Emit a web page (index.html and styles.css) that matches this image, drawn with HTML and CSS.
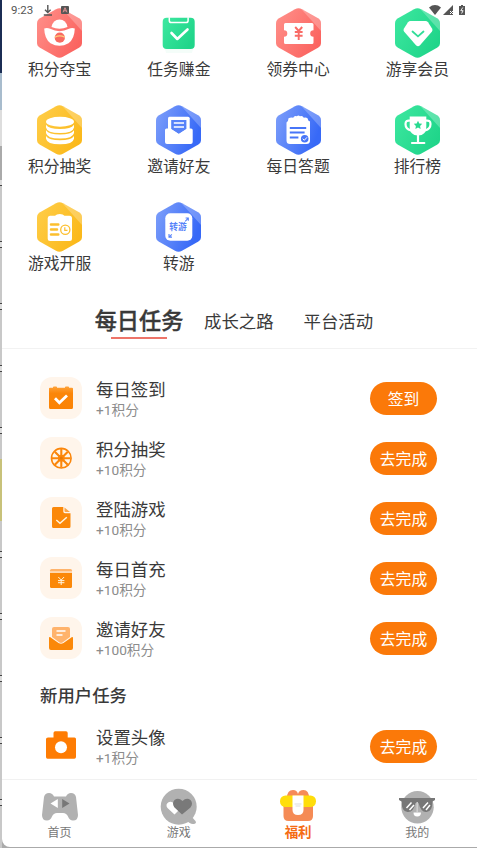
FILE: index.html
```html
<!DOCTYPE html>
<html lang="zh-CN">
<head>
<meta charset="utf-8">
<title>福利</title>
<link rel="stylesheet" href="styles.css">
</head>
<body>
<svg class="defs" aria-hidden="true">
  <defs>
    <linearGradient id="red" x1="0" y1="0" x2="1" y2=".6"><stop offset="0" stop-color="#ff918b"/><stop offset="1" stop-color="#fb6460"/></linearGradient>
    <linearGradient id="green" x1="0" y1="0" x2="1" y2=".6"><stop offset="0" stop-color="#3de8a0"/><stop offset="1" stop-color="#20d58a"/></linearGradient>
    <linearGradient id="gold" x1="0" y1="0" x2="1" y2=".6"><stop offset="0" stop-color="#ffce4a"/><stop offset="1" stop-color="#fbb91b"/></linearGradient>
    <linearGradient id="blue" x1="0" y1="0" x2="1" y2=".4"><stop offset="0" stop-color="#7fa0fa"/><stop offset="1" stop-color="#3769f7"/></linearGradient>
    <linearGradient id="orange" x1="0" y1="0" x2="0" y2="1"><stop offset="0" stop-color="#ffa33a"/><stop offset=".3" stop-color="#fb8609"/><stop offset="1" stop-color="#fb8304"/></linearGradient>
    <symbol id="hex" viewBox="0 0 45 50">
      <path d="M19 1.2Q22.5-.7 26 1.2L42 10.2Q45 12 45 15.3V34.7Q45 38 42 39.8L26 48.8Q22.5 50.7 19 48.8L3 39.8Q0 38 0 34.7V15.3Q0 12 3 10.2L19 1.2Z"/>
      <path d="M25 .8L42 10.2Q45 12 45 15.3V23Z" fill="#fff" fill-opacity=".25"/>
    </symbol>
  </defs>
</svg>
<div class="phone">
  <header class="status">
    <span class="time">9:23</span>
    <svg class="st-dl" viewBox="0 0 10 11"><path d="M4.8 0V7M2 4.7L4.8 7.5 7.6 4.7M.8 10H9" fill="none" stroke="#555" stroke-width="1.4"/></svg>
    <svg class="st-app" viewBox="0 0 8 8"><rect width="8" height="8" rx="1" fill="#555"/><path d="M2 6.3L4 1.7 6 6.3M2.8 4.8H5.2" fill="none" stroke="#e99" stroke-width=".9"/></svg>
    <span class="spacer"></span>
    <svg class="st-wifi" viewBox="0 0 12 10"><path d="M0 2.4Q6-2.2 12 2.4L6 10Z" fill="#555"/></svg>
    <svg class="st-sig" viewBox="0 0 10 10"><path d="M10 0V10H0Z" fill="#555"/><path d="M7 6L10 9M10 6L7 9" stroke="#fff" stroke-width="1"/></svg>
    <svg class="st-bat" viewBox="0 0 6 10"><path d="M2 0H4V1H6V10H0V1H2Z" fill="#555"/><path d="M3.8 2.5L1.8 5.7H4.1L2.6 8.5" fill="none" stroke="#fff" stroke-width=".9"/></svg>
  </header>

  <section class="shortcuts">
    <div class="cell"><svg viewBox="0 0 45 50"><use href="#hex" width="45" height="50" fill="url(#red)"/><path d="M14.5 19Q16 11.5 22.5 11.5T30.5 19Q22.5 22.5 14.5 19Z" fill="#fff"/><path d="M7.2 20.5Q10 19.3 13.2 20.8Q22.5 25.5 32 20.8Q35 19.3 37.8 20.5Q37.5 31 31.5 35.2Q22.5 40.5 13.5 35.2Q7.5 31 7.2 20.5Z" fill="#fff"/><circle cx="22.8" cy="29.7" r="5.1" fill="#f86a61"/><path d="M17.8 29.3Q22.8 26.5 27.8 29.3" fill="none" stroke="#ffd07a" stroke-width="1.2"/></svg><span>积分夺宝</span></div>
    <div class="cell"><svg viewBox="0 0 45 50"><path d="M8 37H38L36 45H10Z" fill="#20d58a" opacity=".05"/><rect x="6.7" y="9.8" width="32" height="31.2" rx="4" fill="url(#green)"/><path d="M13.3 9.2V12.5Q13.3 14.6 15.4 14.6H30Q32.1 14.6 32.1 12.5V9.2" fill="none" stroke="#fff" stroke-width="1.5"/><path d="M15.5 25L21.3 31 31.5 21.5" fill="none" stroke="#fff" stroke-width="2.6" stroke-linecap="round" stroke-linejoin="round"/></svg><span>任务赚金</span></div>
    <div class="cell"><svg viewBox="0 0 45 50"><use href="#hex" width="45" height="50" fill="url(#red)"/><path d="M9.5 15H36Q37.5 15 37.5 16.5V22.2A3.3 3.3 0 0 0 37.5 28.8V34.5Q37.5 36 36 36H9.5Q8 36 8 34.5V28.8A3.3 3.3 0 0 0 8 22.2V16.5Q8 15 9.5 15Z" fill="#fff"/><path d="M19.2 19L22.7 23 26.2 19M18.8 24H26.6M18.8 27.8H26.6M22.7 23V32" fill="none" stroke="#f96b66" stroke-width="1.9"/></svg><span>领券中心</span></div>
    <div class="cell"><svg viewBox="0 0 45 50"><use href="#hex" width="45" height="50" fill="url(#green)"/><path d="M15.5 13H30.5Q32 13 33 14.3L37.2 20.8Q38 22.4 36.8 23.8L25 37.3Q23 39.3 21 37.3L9.2 23.8Q8 22.4 8.8 20.8L13 14.3Q14 13 15.5 13Z" fill="#fff"/><path d="M17.5 23.5L23 28.4 28.5 23.5" fill="none" stroke="#31dd98" stroke-width="1.8" stroke-linecap="round"/></svg><span>游享会员</span></div>
    <div class="cell"><svg viewBox="0 0 45 50"><use href="#hex" width="45" height="50" fill="url(#gold)"/><g fill="#fff"><ellipse cx="23" cy="16.8" rx="14" ry="5"/><path id="coin" d="M9 19.7Q12 24 23 24T37 19.7V22.5Q36 28 23 28T9 22.5Z"/><use href="#coin" y="5.6"/><use href="#coin" y="11.2"/></g></svg><span>积分抽奖</span></div>
    <div class="cell"><svg viewBox="0 0 45 50"><use href="#hex" width="45" height="50" fill="url(#blue)"/><path d="M12 25V13.3Q12 11.8 13.5 11.8H32Q33.7 11.8 33.7 13.3V25L23 31Z" fill="#fff"/><path d="M15.2 15H30.4V24L22.8 29 15.2 24Z" fill="#5682f9"/><path d="M17.8 18H28M17.8 22H28" stroke="#fff" stroke-width="1.7"/><path d="M10.5 23.5H14L22.8 29 31.5 23.5H35Q36.7 23.5 36.7 25V37Q36.7 39 34.7 39H11Q9 39 9 37V25Q9 23.5 10.5 23.5Z" fill="#fff"/></svg><span>邀请好友</span></div>
    <div class="cell"><svg viewBox="0 0 45 50"><use href="#hex" width="45" height="50" fill="url(#blue)"/><path d="M12.5 13.3Q15 12 17.2 12.8Q18.3 10.2 20.8 11.3Q22.4 9.5 24 11.3Q26.7 10.2 27.8 12.8Q30 12 31.7 13.5Q31.7 15.8 34 16.5V35.5Q34 39 30.5 39H14Q10.5 39 10.5 35.5V17.5Q12.5 16 12.5 13.3Z" fill="#fff"/><path d="M13.8 23H30.2M13.8 27.5H28.6M13.8 32.5H22.4" stroke="#4775f8" stroke-width="2"/><circle cx="28.7" cy="33.7" r="3.8" fill="#4775f8"/><path d="M26.8 33.7L28.3 35.3 31 32.3" stroke="#fff" fill="none" stroke-width="1"/></svg><span>每日答题</span></div>
    <div class="cell"><svg viewBox="0 0 45 50"><use href="#hex" width="45" height="50" fill="url(#green)"/><g fill="none" stroke="#fff" stroke-width="2.2"><path d="M15 15.7Q10.5 15 10.5 19Q10.5 24 16 25.5M31 15.7Q35.5 15 35.5 19Q35.5 24 30 25.5"/><path d="M23 29V37M17 38H29.3" stroke-linecap="round"/></g><path d="M14.7 11.5H31.3V22Q31.3 30.5 23 30.5T14.7 22Z" fill="#fff"/><path d="M23 15.8L24.3 18.5 27.2 18.8 25.1 20.9 25.6 23.9 23 22.5 20.4 23.9 20.9 20.9 18.8 18.8 21.7 18.5Z" fill="#28d990"/></svg><span>排行榜</span></div>
    <div class="cell"><svg viewBox="0 0 45 50"><use href="#hex" width="45" height="50" fill="url(#gold)"/><path d="M13 13.7H18Q19.5 12 22.8 12T27.5 13.7H32.5Q35 13.7 35 16.2V36.5Q35 39 32.5 39H13.2Q10.7 39 10.7 36.5V16.2Q10.7 13.7 13 13.7Z" fill="#fff"/><path d="M14 22.5H21.3M14 27.5H20M14 32.5H21.3" stroke="#fcbf2e" stroke-width="2.5" stroke-linecap="round"/><circle cx="28.3" cy="27.8" r="4.6" fill="#fff" stroke="#fcbf2e" stroke-width="1.3"/><path d="M27.8 25.3V28.3H30.5" fill="none" stroke="#fcbf2e" stroke-width="1.2"/></svg><span>游戏开服</span></div>
    <div class="cell"><svg viewBox="0 0 45 50"><use href="#hex" width="45" height="50" fill="url(#blue)"/><rect x="9.3" y="11.3" width="27" height="27.5" rx="5" fill="#fff"/><text x="13.3" y="27.8" class="mini">转游</text><path d="M29.2 19.3L32 16.3M29.6 16H32.3V18.8M15.8 32.3L13.3 34.8M13 32V35.1H16" fill="none" stroke="#5682f9" stroke-width="1.1"/></svg><span>转游</span></div>
  </section>

  <nav class="tabs"><span class="tab active">每日任务</span><span class="tab second">成长之路</span><span class="tab">平台活动</span></nav>

  <main class="tasks">
    <div class="task"><svg class="ticon" viewBox="0 0 42 42"><path d="M9 11.5Q9 10.8 10 10.8H13V10Q13 9.5 14 9.5H16Q17 9.5 17 10V10.8H25V10Q25 9.5 26 9.5H28Q29 9.5 29 10V10.8H32Q33 10.8 33 11.8V30.5Q33 32 31.5 32H10.5Q9 32 9 30.5Z" fill="url(#orange)"/><path d="M15 21.2L19.4 25.7 27 18.5" fill="none" stroke="#fff" stroke-width="2.8"/></svg><div class="info"><b>每日签到</b><small>+1积分</small></div><button>签到</button></div>
    <div class="task"><svg class="ticon" viewBox="0 0 42 42"><circle cx="21.3" cy="21.2" r="9.8" fill="#fff5e8" stroke="#fb860b" stroke-width="1.6"/><g stroke="#fb860b" stroke-width="2.1"><path d="M21.3 12V30.4M12 21.2H30.6M14.8 14.7L27.8 27.7M27.8 14.7L14.8 27.7"/></g><circle cx="21.3" cy="21.2" r="3.4" fill="#fb860b"/><circle cx="21.3" cy="21.2" r="1.4" fill="#e77907"/></svg><div class="info"><b>积分抽奖</b><small>+10积分</small></div><button>去完成</button></div>
    <div class="task"><svg class="ticon" viewBox="0 0 42 42"><path d="M13.5 10H23.3V14.5Q23.3 16.3 25 16.3H30.5V29.5Q30.5 31 29 31H13.5Q12 31 12 29.5V11.5Q12 10 13.5 10Z" fill="#fb8809"/><path d="M24.5 10.5L30 15H25.5Q24.5 15 24.5 14Z" fill="#fba64d"/><path d="M16.3 23L20 26.3 26.8 20.2" fill="none" stroke="#fff4df" stroke-width="1.5"/></svg><div class="info"><b>登陆游戏</b><small>+10积分</small></div><button>去完成</button></div>
    <div class="task"><svg class="ticon" viewBox="0 0 42 42"><path d="M10 14.5V13.5Q10 12 11.5 12H30.5Q32 12 32 13.5V14.5Z" fill="#ffb46c"/><path d="M10 15.8H32V29.5Q32 31 30.5 31H11.5Q10 31 10 29.5Z" fill="#fb8809"/><path d="M18.3 20L21.2 23 24.1 20M18 23.6H24.4M18 25.7H24.4M21.2 23V28" fill="none" stroke="#fff4df" stroke-width="1"/></svg><div class="info"><b>每日首充</b><small>+10积分</small></div><button>去完成</button></div>
    <div class="task"><svg class="ticon" viewBox="0 0 42 42"><path d="M14 10H28Q30 10 30 12V20L22.5 25.5Q21 26.3 19.5 25.5L12 20V12Q12 10 14 10Z" fill="#ffb36c"/><path d="M16.5 14H25.5M16.5 18H22.5" stroke="#fff" stroke-width="1.5"/><path d="M10 20L18.5 26Q21 27.3 23.5 26L32 20Q33 19.700 33 21V31Q33 33 31 33H11Q9 33 9 31V21Q9 19.700 10 20Z" fill="#fb8809"/></svg><div class="info"><b>邀请好友</b><small>+100积分</small></div><button>去完成</button></div>
    <h2>新用户任务</h2>
    <div class="task"><svg class="ticon plain" viewBox="0 0 42 42"><path d="M8 12.500H13.500V8Q13.500 6.300 15.200 6.300H26Q27.700 6.300 27.700 8V12.500H34.500Q36 12.500 36 14V32Q36 33.800 34.300 33.800H7.500Q6 33.800 6 32V14Q6 12.500 8 12.500Z" fill="#fe7c03"/><circle cx="21" cy="22.300" r="6" fill="#fff"/></svg><div class="info"><b>设置头像</b><small>+1积分</small></div><button>去完成</button></div>
  </main>

  <footer class="bottom">
    <div class="nav"><svg viewBox="0 0 38 38"><path d="M3 9Q4 5 8 5Q11.500 5 13 8.500H25Q26.500 5 30 5Q34 5 35 9L37 27Q37 32.500 32 32.500Q28.500 32.500 27 28.500Q25.500 25 22 25H16Q12.500 25 11 28.500Q9.500 32.500 6 32.500Q1 32.500 1 27Z" fill="#b1b1b1"/><path d="M9.500 15.500L16.800 11V20Z" fill="#fff"/><path d="M28.500 15.500L21.200 11V20Z" fill="#777"/></svg><span>首页</span></div>
    <div class="nav"><svg viewBox="0 0 38 38"><circle cx="18.700" cy="18.700" r="18" fill="#b1b1b1"/><path d="M25 31Q30 36.500 33.500 36Q37 35.500 35.500 33L30 27Z" fill="#b1b1b1"/><path d="M14.500 26.500L7.500 20Q5 16.500 8.500 14.200Q11.500 12.800 14.500 16Q17 13 20 15L21 20Z" fill="#fff"/><path d="M22 26.500L14.500 19.500Q11.500 15.500 14.500 12Q18.500 9 22.500 13Q26.500 9 30.500 12Q33.500 15.500 30.500 19.500Z" fill="#797979"/></svg><span>游戏</span></div>
    <div class="nav selected"><svg viewBox="0 0 38 38"><path d="M8 10Q8 2 14 2Q18 2 19 6Q20 2 24.500 2Q30 2 30 10Z" fill="#f68b59"/><path d="M4.500 15H34V28Q34 33 29 33H9.500Q4.500 33 4.500 28Z" fill="#f58b55"/><rect x="1" y="7.500" width="36" height="11.500" rx="5.500" fill="#ffdd0b"/><path d="M13.500 7.500H24.500V22Q24.500 27 19 27T13.500 22Z" fill="#fff"/><path d="M15.500 16H22.500M16.500 18H21.500" stroke="#ddd"/></svg><span>福利</span></div>
    <div class="nav"><svg viewBox="0 0 38 38"><circle cx="19.500" cy="19.300" r="16.200" fill="#b1b1b1"/><path d="M1 10H37V12L34.500 13.500Q34.500 23.500 28.500 24Q23 24.500 20.500 15H17.500Q15.500 24.500 9.500 24Q3.500 23.500 3.500 13.500L1 12Z" fill="#777"/><path d="M8.500 20L13.500 14.500M11.500 22L16 17M25 20L30 14.500M28 22L32 17" stroke="#fff" stroke-width="1.500"/><path d="M15.500 24.500H23Q23 28.500 19.200 28.500T15.500 24.500Z" fill="#fff"/><path d="M19.200 14V24" stroke="#d0d0d0" stroke-width="1.500"/></svg><span>我的</span></div>
  </footer>
</div>
</body>
</html>
```
FILE: styles.css
```css
* { box-sizing: border-box; }
body {
  margin: 0;
  height: 848px;
  overflow: hidden;
  padding-left: 2px;
  font-family: Roboto, "Noto Sans CJK SC", sans-serif;
  color: #3a3a3a;
  background:
    linear-gradient(#1b2d54 0 73px, #a8bccd 73px 110px, #ddd 110px 146px, #aaa 146px 180px, transparent 180px) 0 0 / 2px 100% no-repeat,
    linear-gradient(transparent 459px, #c8c27a 459px 521px, transparent 521px) 0 0 / 2px 100% no-repeat,
    repeating-linear-gradient(#c8c8c8 0 55px, #444 55px 56px, #ddd 56px 61px, #444 61px 62px) 0 0 / 2px 100% no-repeat,
    #aaa;
}
.defs { position: absolute; width: 0; height: 0; }
.phone {
  height: 847px;
  display: flex;
  flex-direction: column;
  background: #fff;
  border-bottom-left-radius: 8px;
  overflow: hidden;
}
.status {
  position: absolute;
  z-index: 2;
  top: 3px;
  left: 11px;
  right: 11px;
  height: 14px;
  display: flex;
  align-items: center;
}
.time { font-size: 11.500px; color: #555; width: 32px; }
.st-dl { width: 10px; height: 11px; }
.st-app { width: 8px; height: 8px; margin-left: 8px; }
.spacer { flex: 1; }
.st-wifi { width: 12px; height: 10px; }
.st-sig { width: 10px; height: 10px; margin-left: 2px; }
.st-bat { width: 6px; height: 10px; margin: 0 1px 0 6px; }
.shortcuts {
  display: grid;
  grid-template-columns: repeat(4, 119.250px);
  grid-auto-rows: 97px;
  margin-left: -2px;
  padding-top: 8px;
  height: 299px;
}
.cell { display: flex; flex-direction: column; align-items: center; }
.cell svg { width: 45px; height: 50px; display: block; }
.cell span { font-size: 15.800px; line-height: 24px; }
.mini { font: bold 8.700px "Noto Sans CJK SC", sans-serif; fill: #5682f9; }
.tabs {
  height: 50px;
  padding: 3px 0 0 92px;
  border-bottom: 1px solid #f2f2f2;
  display: flex;
  align-items: flex-start;
  font-size: 17.400px;
  line-height: 41px;
}
.active {
  font-size: 22.200px;
  font-weight: 500;
  -webkit-text-stroke: .35px #333;
  width: 90px;
  display: flex;
  flex-direction: column;
  align-items: center;
  white-space: nowrap;
  line-height: 38px;
}
.active::after { content: ""; width: 56px; height: 2px; margin-top: -3px; background: #ed7469; }
.second { margin: 0 30px 0 20px; }
.tasks { flex: 1; padding: 19px 40px 0 38px; }
.task { height: 60px; display: flex; align-items: center; }
.ticon { width: 42px; height: 42px; border-radius: 12px; background: #fff5eb; flex: none; }
.plain { background: none; }
.info { flex: 1; margin: 3px 0 0 14px; display: flex; flex-direction: column; }
.info b { font-size: 17.400px; font-weight: 400; line-height: 22px; }
.info small { font-size: 13.700px; line-height: 20px; margin-top: -1px; color: #8c8c8c; }
.task button {
  width: 67px;
  height: 33px;
  border: 0;
  border-radius: 17px;
  padding: 0;
  background: #fb7909;
  color: #fff;
  font: 15.800px/33px "Noto Sans CJK SC", sans-serif;
}
h2 { font-size: 17.400px; font-weight: 500; line-height: 24px; margin: 16px 0 8px; }
.bottom {
  height: 68px;
  border-top: 1px solid #f1f1f1;
  margin-left: -2px;
  display: grid;
  grid-template-columns: repeat(4, 119.250px);
}
.nav { display: flex; flex-direction: column; align-items: center; padding-top: 8px; color: #777; font-size: 12px; }
.nav svg { width: 38px; height: 38px; }
.nav span { line-height: 14px; }
.selected span { color: #f56c14; font-size: 13.500px; font-weight: 700; line-height: 12px; }
```
